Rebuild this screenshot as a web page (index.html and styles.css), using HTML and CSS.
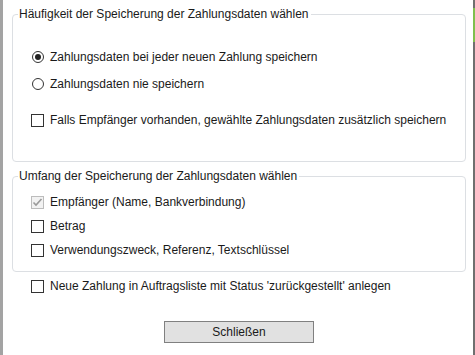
FILE: index.html
```html
<!DOCTYPE html>
<html lang="de">
<head>
  <meta charset="UTF-8" />
  <title>Zahlungsdaten speichern</title>
  <link rel="stylesheet" href="styles.css">
</head>
<body>

  <div class="dialog">

    <!-- Haeufigkeit -->
    <fieldset class="group group-freq">
      <legend>Häufigkeit der Speicherung der Zahlungsdaten wählen</legend>
      <div class="row row-first">
        <span class="radio checked"></span>
        <span class="label">Zahlungsdaten bei jeder neuen Zahlung speichern</span>
      </div>
      <div class="row row-second">
        <span class="radio"></span>
        <span class="label">Zahlungsdaten nie speichern</span>
      </div>
      <div class="row row-extra">
        <span class="box"></span>
        <span class="label">Falls Empfänger vorhanden, gewählte Zahlungsdaten zusätzlich speichern</span>
      </div>
    </fieldset>

    <!-- Umfang -->
    <fieldset class="group group-scope">
      <legend>Umfang der Speicherung der Zahlungsdaten wählen</legend>
      <div class="row">
        <span class="box disabled">
          <svg width="11" height="11" viewBox="0 0 11 11"><polyline points="1.5,5.5 4,8 9.5,2" fill="none" stroke="#9a9a9a" stroke-width="1.6"/></svg>
        </span>
        <span class="label">Empfänger (Name, Bankverbindung)</span>
      </div>
      <div class="row">
        <span class="box"></span>
        <span class="label">Betrag</span>
      </div>
      <div class="row">
        <span class="box"></span>
        <span class="label">Verwendungszweck, Referenz, Textschlüssel</span>
      </div>
    </fieldset>

    <div class="row row-pending">
      <span class="box"></span>
      <span class="label">Neue Zahlung in Auftragsliste mit Status 'zurückgestellt' anlegen</span>
    </div>

    <div class="actions">
      <button class="btn">Schließen</button>
    </div>

  </div>

</body>
</html>
```

FILE: styles.css
```css
/* Base */
html, body {
  margin: 0;
  height: 100%;
  background: #fff;
}

body {
  font-family: "Liberation Sans", Arial, sans-serif;
  font-size: 12px;
  color: #1a1a1a;
}

/* Window frame */
.dialog {
  position: relative;
  box-sizing: border-box;
  height: 355px;
  border-left: 3px solid #a3a3a3;
  border-right: 2px solid #6f6f6f;
  padding: 7px 7px 0 9px;
  display: flex;
  flex-direction: column;
}

/* green tab on the right edge */
.dialog::after {
  content: "";
  position: absolute;
  right: -2px;
  top: 8px;
  width: 2px;
  height: 34px;
  background: #7fbf4d;
}

/* Group boxes */
.group {
  margin: 0;
  padding: 0 0 0 18px;
  border: 1px solid #dcdfe3;
  border-radius: 4px;
}

.group legend {
  margin-left: -13px;
  padding: 0 2px 0 1px;
  line-height: 14px;
}

.group-freq {
  padding-top: 28px;
  padding-bottom: 33px;
}

.group-scope {
  margin-top: 7px;
  padding-top: 11px;
  padding-bottom: 13px;
}

/* Rows */
.row {
  display: flex;
  align-items: center;
  height: 16px;
  gap: 6px;
}

.group-freq .row-second { margin-top: 11px; }
.group-freq .row-extra  { margin-top: 20px; }

.group-scope .row + .row { margin-top: 8px; }

.row-pending {
  margin-top: 6px;
  padding-left: 19px;
}

/* Radio buttons */
.radio {
  box-sizing: border-box;
  width: 12px;
  height: 12px;
  margin-left: 1px;
  border: 1px solid #333;
  border-radius: 50%;
  display: flex;
  align-items: center;
  justify-content: center;
}

.radio.checked::before {
  content: "";
  width: 6px;
  height: 6px;
  border-radius: 50%;
  background: #222;
}

/* Checkboxes */
.box {
  box-sizing: border-box;
  width: 13px;
  height: 13px;
  border: 1px solid #333;
  background: #fff;
  display: flex;
  align-items: center;
  justify-content: center;
}

.box.disabled {
  border-color: #bcbcbc;
  background: #f2f2f2;
}

/* Button */
.actions {
  display: flex;
  justify-content: center;
  margin-top: 27px;
}

.btn {
  width: 150px;
  height: 22px;
  padding: 0;
  border: 1px solid #808080;
  background: #e1e1e1;
  font-family: "Liberation Sans", Arial, sans-serif;
  font-size: 12px;
  color: #1a1a1a;
}
```
